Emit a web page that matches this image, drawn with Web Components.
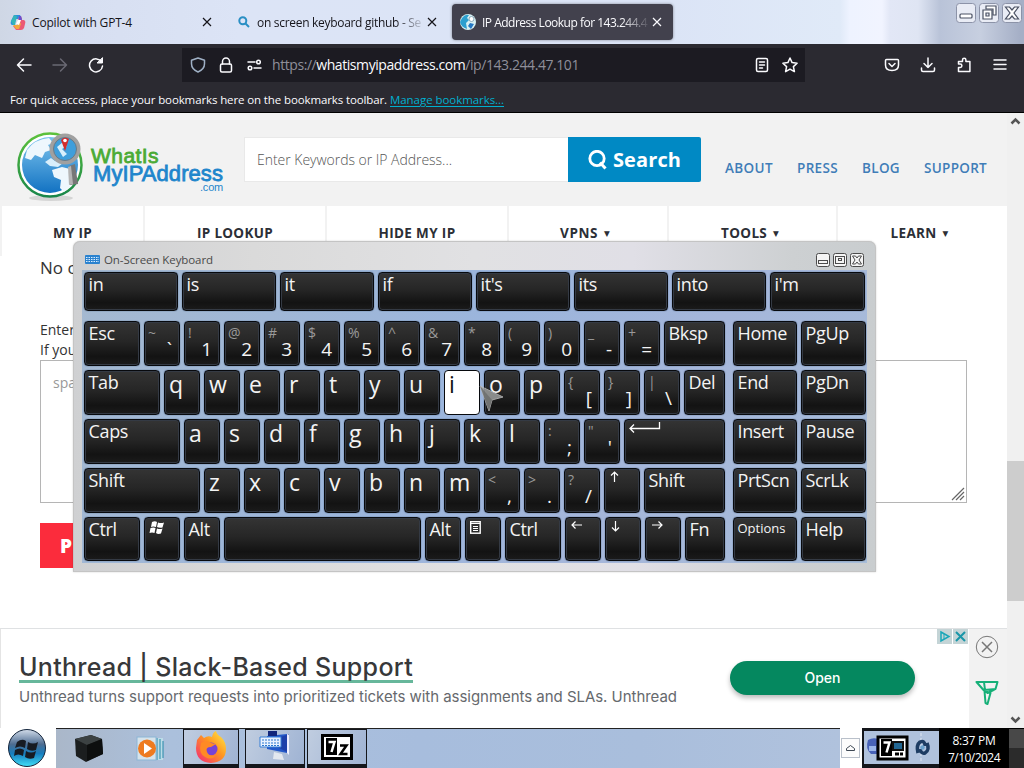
<!DOCTYPE html>
<html lang="en">
<head>
<meta charset="utf-8">
<title>IP Address Lookup</title>
<style>
  body {
    margin: 0;
    width: 1024px;
    height: 768px;
    overflow: hidden;
    display: flex;
    flex-direction: column;
    background: #fff;
    font-family: "Open Sans", "Noto Sans", sans-serif;
  }
</style>
</head>
<body>
<tab-strip>
  <browser-tab style="width:218px;padding-left:10px" text-width="100" label="Copilot with GPT-4">
    <svg slot="icon" width="16" height="16" viewBox="0 0 16 16"><path d="M4 1h6l2 4H6L4 11H2Q0 10 1 7Z" fill="#2b8fe0"/><path d="M1 7l3-6 3 1-2 9H3Z" fill="#36b5b8"/><path d="M9 2h2l1 4h2q2 1 1 4l-1 4q-1 2-3 2H6l-3-4h4Z" fill="#ec5a74"/><path d="M3 11h4l2-4 2 3-2 5H6Z" fill="#f3a83c"/><path d="M9 2h2l1 4H9Z" fill="#6b4fd0"/><path d="M6 10l2-4h3l-2 5Z" fill="#fff"/></svg>
  </browser-tab>
  <browser-tab style="width:223px;padding-left:18px;margin-left:2px" text-width="164" gap="7" label="on screen keyboard github - Se" fade>
    <svg slot="icon" width="12" height="12" viewBox="0 0 12 12" fill="none" stroke="#2a8fc4" stroke-width="2"><circle cx="4.8" cy="4.8" r="3.5"/><path d="M7.500 7.500l3.500 3.500"/></svg>
  </browser-tab>
  <browser-tab style="width:221px;padding-left:8px;margin-left:9px" text-width="165" label="IP Address Lookup for 143.244.4" fade active>
    <svg slot="icon" width="16" height="16" viewBox="0 0 16 16"><circle cx="8" cy="8" r="8" fill="#d7f1f4"/><path d="M2 4q3-4 7-3L7 4l2 2-3 3 1 6Q1 13 0 8Z" fill="#2c9fcf"/><path d="M10 9l4 1-3 5-3-3Z" fill="#2678c4"/><circle cx="11.500" cy="5" r="2.500" fill="#fff" stroke="#8ab"/></svg>
  </browser-tab>
  <window-buttons slot="buttons"></window-buttons>
</tab-strip>
<nav-toolbar></nav-toolbar>
<web-view></web-view>
<task-bar></task-bar>
<osk-window></osk-window>

<script>
// Text run stretched to a given width through letter-spacing
class FitText extends HTMLElement {
  constructor() {
    super();
    this.attachShadow({ mode: "open" });
    this.shadowRoot.innerHTML = `
      <style>
        :host { display: inline-block; flex: none; white-space: nowrap; }
      </style>
      <slot></slot>
    `;
  }

  connectedCallback() {
    const target = Number(this.getAttribute("w"));
    const n = this.textContent.length;
    if (!target || !n) return;
    this.style.letterSpacing = "0px";
    const natural = this.getBoundingClientRect().width;
    this.style.letterSpacing = (target - natural) / n + "px";
  }
}
customElements.define("fit-text", FitText);

class WindowButtons extends HTMLElement {
  constructor() {
    super();
    this.attachShadow({ mode: "open" });
    this.shadowRoot.innerHTML = `
      <style>
        :host { display: flex; gap: 3px; }
        svg { display: block; }
        rect.b { fill: #e9ecf5; stroke: #8c93a8; }
        .g { fill: #fff; stroke: #4a5163; stroke-width: 1.2; }
      </style>
      <svg width="20" height="20"><rect class="b" x=".5" y=".5" width="19" height="19" rx="3"/><rect class="g" x="4" y="11" width="12" height="4" rx="1"/></svg>
      <svg width="20" height="20"><rect class="b" x=".5" y=".5" width="19" height="19" rx="3"/><path class="g" d="M7 3h10v9h-3V6H7Z"/><path class="g" fill-rule="evenodd" d="M4 7h9v9H4ZM7 10v3h3v-3Z"/></svg>
      <svg width="20" height="20"><rect class="b" x=".5" y=".5" width="19" height="19" rx="3"/><path class="g" d="M3.500 4h4L10 7l2.500-3h4L12 10l4.500 6h-4L10 13l-2.500 3h-4L8 10Z"/></svg>
    `;
  }
}
customElements.define("window-buttons", WindowButtons);

class BrowserTab extends HTMLElement {
  constructor() {
    super();
    this.attachShadow({ mode: "open" });
  }

  connectedCallback() {
    const gap = this.getAttribute("gap") || 6;
    this.shadowRoot.innerHTML = `
      <style>
        :host {
          display: flex; align-items: center; flex: none; box-sizing: border-box;
          height: 36px; margin-top: 4px; border-radius: 4px;
          font-size: 12px; color: #15141a;
        }
        :host([active]) { background: #42414d; color: #fbfbfe; box-shadow: 0 0 3px #0006; }
        .text { margin-left: ${gap}px; flex: 1; white-space: nowrap; }
        :host([fade]) .text { mask-image: linear-gradient(90deg, #000 calc(100% - 30px), transparent); }
        .x { flex: none; margin: 0 6px 0 1px; }
        :host([active]) .x { margin-right: 11px; }
        ::slotted(svg) { flex: none; }
      </style>
      <slot name="icon"></slot>
      <div class="text"><fit-text w="${this.getAttribute("text-width")}">${this.getAttribute("label")}</fit-text></div>
      <svg class="x" width="10" height="10" stroke="currentColor" stroke-width="1.200"><path d="M1 1l8 8M9 1l-8 8"/></svg>
    `;
  }
}
customElements.define("browser-tab", BrowserTab);

class TabStrip extends HTMLElement {
  constructor() {
    super();
    this.attachShadow({ mode: "open" });
    this.shadowRoot.innerHTML = `
      <style>
        :host {
          display: flex; align-items: flex-start; flex: none; height: 44px;
          background: linear-gradient(90deg, #cfd7e5 0, #d6def0 60px, #dce4f6 240px, #dbe4f6 670px, #e0eaf8 840px, #eef3ff 850px, #f1f4ff 882px, #e2e7f6 890px, #dfe5f3 918px, #b9c3d8 940px, #c7cfe0 980px, #a5afc6 1020px);
        }
        .space { flex: 1; }
        ::slotted(window-buttons) { margin: 3px 2px 0 0; }
      </style>
      <slot></slot>
      <div class="space"></div>
      <slot name="buttons"></slot>
    `;
  }
}
customElements.define("tab-strip", TabStrip);

class NavToolbar extends HTMLElement {
  constructor() {
    super();
    this.attachShadow({ mode: "open" });
    this.shadowRoot.innerHTML = `
      <style>
        :host { display: flex; flex-direction: column; flex: none; height: 69px; background: #2b2a31; color: #fbfbfe; border-bottom: 1px solid #000; box-sizing: border-box; }
        .bar { display: flex; align-items: center; height: 41px; }
        svg { fill: none; stroke: #fbfbfe; stroke-width: 1.5; flex: none; stroke-linecap: round; stroke-linejoin: round; }
        .nav { display: flex; gap: 20px; width: 166px; padding-left: 16px; }
        .url {
          display: flex; align-items: center; width: 623px; height: 34px;
          box-sizing: border-box; padding: 0 7px 0 8px; background: #1c1b22;
          font-size: 14px; color: #8f8f9a;
        }
        .url b { font-weight: 400; color: #fbfbfe; }
        .url svg { margin-right: 12px; }
        .url svg:last-child { margin-right: 0; }
        .url fit-text { margin: 0 auto 0 -2px; }
        .right { display: flex; gap: 20px; margin: 0 16px 0 auto; }
        .marks { padding: 5px 10px 0; font-size: 11.5px; line-height: 20px; display: flex; gap: 3px; }
        .marks a { color: #00b0cf; }
        .marks a fit-text { text-decoration: underline; text-underline-offset: 2px; }
      </style>
      <div class="bar">
        <div class="nav">
          <svg width="16" height="16"><path d="M15 8H1.500M7.500 2l-6 6 6 6"/></svg>
          <svg width="16" height="16" style="stroke:#6a6973"><path d="M1 8h13.500M8.500 2l6 6-6 6"/></svg>
          <svg width="16" height="16"><path d="M13.600 5A6.500 6.500 0 1 0 14.500 9"/><path d="M14.500 1v5h-5Z" fill="#fbfbfe" stroke-width="1"/></svg>
        </div>
        <div class="url">
          <svg width="16" height="16" style="stroke:#9fb0c5"><path d="M8 1l6.500 2.300v3.500q0 5.500-6.500 8.200Q1.500 12.300 1.500 6.800V3.300Z"/></svg>
          <svg width="16" height="16"><rect x="2.500" y="7" width="11" height="8" rx="1.500"/><path d="M4.500 7V4.500a3.500 3.500 0 0 1 7 0V7"/></svg>
          <svg width="16" height="16"><circle cx="12.500" cy="5" r="1.800"/><path d="M2 5h7M8 11h7"/><circle cx="4" cy="11" r="1.800"/></svg>
          <fit-text w="307">https://<b>whatismyipaddress.com</b>/ip/143.244.47.101</fit-text>
          <svg width="16" height="16"><rect x="2.500" y="1.500" width="11" height="13" rx="1.500"/><path d="M5.500 5h5M5.500 8h5M5.500 11h3"/></svg>
          <svg width="16" height="16"><path d="M8 1l2.100 4.600 5 .6-3.700 3.400 1 5L8 12.100l-4.400 2.500 1-5L.9 6.200l5-.6Z"/></svg>
        </div>
        <div class="right">
          <svg width="16" height="16"><path d="M2.500 2.500h11q1 0 1 1V8q0 5.500-6.500 5.500T1.500 8V3.500q0-1 1-1ZM5 6.500l3 3 3-3"/></svg>
          <svg width="16" height="16"><path d="M8 1v9.500M4 6.500l4 4 4-4M1.500 11v2q0 1.500 1.500 1.500h10q1.500 0 1.500-1.500v-2"/></svg>
          <svg width="16" height="16"><path d="M2.500 14.500v-4h1.700a1.700 1.700 0 0 0 0-3.400H2.500V4.500h4V3a1.700 1.700 0 0 1 3.400 0v1.500h4v10Z"/></svg>
          <svg width="16" height="16"><path d="M2 3h12M2 7.500h12M2 12h12"/></svg>
        </div>
      </div>
      <div class="marks">
        <fit-text w="377">For quick access, place your bookmarks here on the bookmarks toolbar.</fit-text>
        <a><fit-text w="114">Manage bookmarks...</fit-text></a>
      </div>
    `;
  }
}
customElements.define("nav-toolbar", NavToolbar);

class SiteLogo extends HTMLElement {
  constructor() {
    super();
    this.attachShadow({ mode: "open" });
    this.shadowRoot.innerHTML = `
      <style>
        :host { display: flex; width: 227px; font-family: "Liberation Sans", sans-serif; }
        svg { flex: none; }
        .words { display: flex; flex-direction: column; align-items: flex-start; margin: 16px 0 0 6px; width: 132px; }
        .a { font-size: 21px; line-height: 18px; color: #4aab35; -webkit-text-stroke: .8px #4aab35; }
        .b { font-size: 22px; line-height: 18px; color: #1f86cc; margin-left: 2px; -webkit-text-stroke: .8px #1f86cc; }
        .c { font-size: 11px; line-height: 8px; color: #1f86cc; align-self: flex-end; }
      </style>
      <svg width="68" height="72" viewBox="0 0 68 72">
        <defs>
          <linearGradient id="sea" x1="0" y1="0" x2="0" y2="1"><stop offset="0" stop-color="#7cc4ee"/><stop offset="1" stop-color="#1272c2"/></linearGradient>
          <linearGradient id="ring" x1="0" y1="0" x2="0" y2="1"><stop offset="0" stop-color="#5cc13c"/><stop offset="1" stop-color="#18864a"/></linearGradient>
        </defs>
        <ellipse cx="34" cy="67" rx="22" ry="3" fill="#d5d5d5"/>
        <circle cx="33" cy="34" r="31.500" fill="#fff" stroke="url(#ring)" stroke-width="2.500"/>
        <circle cx="33" cy="34" r="28" fill="url(#sea)"/>
        <path d="M10 19Q18 8 32 7l4 5-5 2 3 5-6 2-3 6-7-3-4 5-6-2Z" fill="#eef7fd"/>
        <path d="M28 31l6-4 4 3 8 2-5 4-8-1Z" fill="#d8eefb"/>
        <path d="M35 39l10-3 12 3-1 14-9 8-4-4 1-8-7-3Z" fill="#eef7fd"/>
        <path d="M52 35l6-2 3 20-8 1Z" fill="#777"/>
        <path d="M51 36l3-1 2 18-4 1Z" fill="#b5b5b5"/>
        <circle cx="48" cy="18" r="13.500" fill="#3f9edb" stroke="#a0a0a0" stroke-width="4"/>
        <circle cx="48" cy="18" r="11.500" fill="none" stroke="#6d7a84"/>
        <path d="M40 16l6-5 4 4-5 3 5 5-4 3Z" fill="#d8effc"/>
        <path d="M44 9q3-4 8-1l-4 12Z" fill="#d32c2c"/><circle cx="48" cy="9.500" r="1.800" fill="#fff"/>
      </svg>
      <div class="words">
        <fit-text class="a" w="68">WhatIs</fit-text>
        <fit-text class="b" w="130">MyIPAddress</fit-text>
        <fit-text class="c" w="23">.com</fit-text>
      </div>
    `;
  }
}
customElements.define("site-logo", SiteLogo);

class SiteHeader extends HTMLElement {
  constructor() {
    super();
    this.attachShadow({ mode: "open" });
    this.shadowRoot.innerHTML = `
      <style>
        :host { display: block; background: #f2f2f2; }
        .top { display: flex; align-items: flex-start; height: 93px; }
        site-logo { margin: 18px 0 0 17px; }
        .field { width: 324px; height: 45px; margin-top: 24px; box-sizing: border-box; background: #fff; border: 1px solid #e9e9e9; border-right: 0; display: flex; align-items: center; font-size: 14px; font-weight: 300; color: #555; padding-left: 12px; }
        .search { width: 133px; height: 45px; margin-top: 24px; background: #0089c4; color: #fff; border-radius: 0 2px 2px 0; display: flex; align-items: center; gap: 6px; padding-left: 20px; box-sizing: border-box; font-size: 20px; font-weight: 700; }
        .links { display: flex; gap: 24px; margin: 45px 0 0 24px; font-size: 13.5px; line-height: 20px; font-weight: 600; color: #3f7db8; }
        nav { display: flex; height: 50px; padding-left: 2px; }
        nav div { box-sizing: border-box; height: 50px; padding-top: 16px; background: #fff; font-size: 13.5px; line-height: 22px; font-weight: 700; color: #2c2f36; display: flex; justify-content: center; gap: 6px; border-right: 2px solid #f2f2f2; }
        nav div:last-child { border-right: 0; }
        i { font-style: normal; font-size: 7.5px; line-height: 24px; font-family: "DejaVu Sans", sans-serif; }
      </style>
      <div class="top">
        <site-logo></site-logo>
        <div class="field"><fit-text w="195">Enter Keywords or IP Address...</fit-text></div>
        <div class="search">
          <svg width="19" height="20" fill="none" stroke="#fff" stroke-width="2.800"><circle cx="9" cy="8.500" r="7.200"/><path d="M12 12.500l5.500 6" stroke-width="3"/></svg>
          <fit-text w="68">Search</fit-text>
        </div>
        <div class="links">
          <fit-text w="48">ABOUT</fit-text><fit-text w="41">PRESS</fit-text>
          <fit-text w="38">BLOG</fit-text><fit-text w="63">SUPPORT</fit-text>
        </div>
      </div>
      <nav>
        <div style="width:143px"><fit-text w="39">MY IP</fit-text></div>
        <div style="width:182px"><fit-text w="76">IP LOOKUP</fit-text></div>
        <div style="width:182px"><fit-text w="77">HIDE MY IP</fit-text></div>
        <div style="width:160px;padding-right:6px"><fit-text w="38">VPNS</fit-text><i>▼</i></div>
        <div style="width:169px;padding-right:5px"><fit-text w="46">TOOLS</fit-text><i>▼</i></div>
        <div style="width:169px;padding-right:6px"><fit-text w="46">LEARN</fit-text><i>▼</i></div>
      </nav>
    `;
  }
}
customElements.define("site-header", SiteHeader);

class AdBanner extends HTMLElement {
  constructor() {
    super();
    this.attachShadow({ mode: "open" });
    this.shadowRoot.innerHTML = `
      <style>
        :host { display: flex; height: 100px; background: #fff; border-top: 1px solid #dfe1e3; border-left: 1px solid #e4e4e4; box-sizing: border-box; }
        .copy { width: 711px; padding: 24px 0 0 18px; box-sizing: border-box; font-family: Inter, Roboto, sans-serif; }
        h3 { margin: 0; font-size: 25px; line-height: 28px; font-weight: 500; color: #37383a; width: 394px; height: 27px; border-bottom: 3px solid #67b79b; }
        p { margin: 3px 0 0; font-size: 15px; line-height: 21px; color: #66696d; font-weight: 400; }
        button { width: 185px; height: 34px; margin: 32px 0 0 18px; padding: 0; border: 0; border-radius: 17px; background: #05885f; color: #fff; font: 500 14px/34px Inter, sans-serif; box-shadow: 0 3px 5px #0004; }
        .opts { display: flex; gap: 1px; margin: 0 1px 0 auto; }
        .side { width: 38px; background: #f2f2f2; display: flex; flex-direction: column; align-items: center; gap: 21px; padding: 6px 2px 0 0; box-sizing: border-box; }
      </style>
      <div class="copy">
        <h3><fit-text w="394">Unthread | Slack-Based Support</fit-text></h3>
        <p><fit-text w="658">Unthread turns support requests into prioritized tickets with assignments and SLAs. Unthread</fit-text></p>
      </div>
      <button>Open</button>
      <div class="opts">
        <svg width="15" height="15"><rect width="15" height="15" fill="#c4d4d6"/><path d="M4 3l8 4.500-8 4.500Z" fill="none" stroke="#17a6b8" stroke-width="1.500"/><path d="M7 5v5" stroke="#17a6b8"/></svg>
        <svg width="15" height="15"><rect width="15" height="15" fill="#c4d4d6"/><path d="M3 3l9 9M12 3l-9 9" stroke="#1996a8" stroke-width="2"/></svg>
      </div>
      <div class="side">
        <svg width="24" height="24" fill="none" stroke="#777"><circle cx="12" cy="12" r="10.700"/><path d="M7 7l10 10M17 7L7 17" stroke-width="1.500"/></svg>
        <svg width="24" height="25" fill="none" stroke="#16b078" stroke-width="2" stroke-linejoin="round"><path d="M1.500 2h21l-2 7-8 4-4-3ZM9 2l1 8M9.500 11l6 2-3 11-2-1ZM9 10l12-1"/></svg>
      </div>
    `;
  }
}
customElements.define("ad-banner", AdBanner);

class WebView extends HTMLElement {
  constructor() {
    super();
    this.attachShadow({ mode: "open" });
    this.shadowRoot.innerHTML = `
      <style>
        :host { display: flex; height: 615px; flex: none; }
        .page { width: 1007px; display: flex; flex-direction: column; background: #fff; }
        .body { flex: 1; padding: 0 40px; color: #333; }
        .none { font-size: 17px; line-height: 24px; }
        .hint { font-size: 14px; line-height: 20px; margin-top: 40px; }
        .area { width: 927px; height: 143px; box-sizing: border-box; border: 1px solid #b5b5b5; padding: 12px; font-size: 14px; line-height: 20px; color: #999; display: flex; justify-content: space-between; }
        .area svg { align-self: flex-end; margin: 0 -12px -12px 0; }
        .post { width: 140px; height: 45px; margin-top: 20px; padding-left: 20px; box-sizing: border-box; background: #fb2c3c; color: #fff; font-weight: 800; font-size: 19px; line-height: 46px; }
        .scroll { width: 17px; background: #f0f0f0; display: flex; flex-direction: column; align-items: center; }
        .scroll svg { fill: none; stroke: #555; stroke-width: 2.500; flex: none; }
        .gap { height: 331px; }
        .thumb { width: 17px; height: 140px; background: #cdcdcd; margin-bottom: auto; }
      </style>
      <div class="page">
        <site-header></site-header>
        <div class="body">
          <div class="none">No c</div>
          <div class="hint">Enter<br>If you</div>
          <div class="area">spa
            <svg width="16" height="16" stroke="#666" stroke-width="1.200"><path d="M2 14L14 2M6 14l8-8M10 14l4-4"/></svg>
          </div>
          <div class="post">P</div>
        </div>
        <ad-banner></ad-banner>
      </div>
      <div class="scroll">
        <svg width="17" height="17"><path d="M4.500 10.500l4-4 4 4"/></svg>
        <div class="gap"></div>
        <div class="thumb"></div>
        <svg width="17" height="17"><path d="M4.500 6.500l4 4 4-4"/></svg>
      </div>
    `;
  }
}
customElements.define("web-view", WebView);

class TaskBar extends HTMLElement {
  constructor() {
    super();
    this.attachShadow({ mode: "open" });
    this.shadowRoot.innerHTML = `
      <style>
        :host { display: flex; flex: none; height: 40px; background: linear-gradient(90deg, #aab7c9 56px, #abc0dc 170px, #a7bddd 420px, #a9bedc 640px, #b0c2dd 840px); }
        svg { display: block; flex: none; }
        .start { width: 56px; background: #fff; display: flex; justify-content: center; align-items: center; }
        .apps { display: flex; flex: 1; border-top: 1px solid #222; align-items: center; }
        .app { width: 60px; display: flex; justify-content: center; }
        .open { width: 56px; height: 39px; margin-left: 6px; box-sizing: border-box; border: 1px solid #14161b; border-bottom-width: 4px; align-items: center; background: linear-gradient(110deg, #c0cde0, #9fb3d3); }
        .open.wide { width: 60px; }
        .open.last { margin-left: 2px; }
        .tray { display: flex; }
        .up { width: 22px; background: #fff; display: flex; align-items: center; justify-content: center; }
        .icons { width: 77px; box-sizing: border-box; border: solid #14161b; border-width: 3px 0 4px 2px; display: flex; align-items: center; }
        .clock { width: 70px; background: #000; color: #fff; font-size: 12px; line-height: 17px; padding-top: 4px; box-sizing: border-box; display: flex; flex-direction: column; align-items: center; }
        .peek { width: 15px; background: linear-gradient(#484848 50%, #2b2b2b 50%); border-top: 1px solid #000; box-sizing: border-box; }
      </style>
      <div class="start">
        <svg width="40" height="40" viewBox="0 0 40 40">
          <defs><linearGradient id="orb" x1="0" y1="0" x2="0" y2="1"><stop offset="0" stop-color="#d2dcea"/><stop offset=".4" stop-color="#4d6c91"/><stop offset=".65" stop-color="#167dbe"/><stop offset="1" stop-color="#42e0f8"/></linearGradient></defs>
          <circle cx="19" cy="20" r="18.500" fill="url(#orb)" stroke="#13253c"/>
          <path d="M9 14q5-4 9-1l-1 7q-5-3-10 0ZM20 14q5 3 10 0l-2 8q-5 2-9-1ZM7 22q5-3 9 0l-1 6q-5-3-9 0ZM18 23q5 3 10 0l-2 7q-5 2-9-1Z" fill="#171b23"/>
        </svg>
      </div>
      <div class="apps">
        <div class="app" style="width:66px">
          <svg width="32" height="32"><path d="M2 6L18 2l11 4 1 15-17 8L3 23Z" fill="#1b1e1f"/><path d="M2 6L18 2l11 4-15 6Z" fill="#3c4243"/><path d="M14 12l15-6 1 15-16 7Z" fill="#0d0f0f"/></svg>
        </div>
        <div class="app" style="width:55px">
          <svg width="28" height="26"><path d="M18 2h9v22h-9" fill="#bcdce8"/><path d="M21 2v22M24 3v20M27 5v17" stroke="#2688a8"/><rect x="1" y="1" width="19" height="23" fill="#d6e3eb" stroke="#8bb6d6"/><circle cx="11" cy="12.500" r="9" fill="#ee7b20"/><path d="M8 7l8 5.500L8 18Z" fill="#fff"/></svg>
        </div>
        <div class="app open">
          <svg width="32" height="32" viewBox="0 0 32 32">
            <defs><linearGradient id="fox" x1="1" y1="0" x2="0" y2="1"><stop offset="0" stop-color="#fff04a"/><stop offset=".45" stop-color="#ff9520"/><stop offset="1" stop-color="#f4227b"/></linearGradient></defs>
            <path d="M2 9l4-5 3 3q4-3 8-1 1-5 4-6 1 4 5 6 5 5 5 12 0 13-15 14Q1 31 1 17Z" fill="url(#fox)"/>
            <circle cx="16" cy="18" r="6.500" fill="#7743d5"/>
            <path d="M6 12q5-4 10 0l5 1-5 3q-6 0-4 5 2 5 9 3-4 6-11 2T6 12Z" fill="#ff8a25"/>
          </svg>
        </div>
        <div class="app open wide">
          <svg width="32" height="32"><path d="M8 5l20-2v19L8 18Z" fill="#2459c9"/><path d="M8 11l20 10 2-18Z" fill="#1a2f94" opacity=".6"/><path d="M28 3l2 1v20l-2-2Z" fill="#eef"/><path d="M9 0h9v5H9Z" fill="#13277c"/><path d="M1 6h21v10H1Z" fill="#eaf2ff" stroke="#367fd5"/><path d="M3 9h18M3 12h18M3 14.500h18" stroke="#2b79d0" stroke-dasharray="2 1"/><path d="M15 21l8 2 2 6-11-1Z" fill="#e3e8ef"/></svg>
        </div>
        <div class="app open wide last">
          <svg width="32" height="26"><path d="M1.500 1.500h29v23h-29Z" fill="#fff" stroke="#000" stroke-width="3"/><path d="M5 4h11v17H5Z"/><path d="M7.500 8h6l-3 10" fill="none" stroke="#fff" stroke-width="2.500"/><path d="M19 11.500h6.500l-6 8.500h7" fill="none" stroke="#000" stroke-width="2.500"/></svg>
        </div>
      </div>
      <div class="tray">
        <div class="up"><svg width="20" height="20"><rect x=".5" y=".5" width="18" height="19" fill="#fcfcfc" stroke="#b9c0ca"/><path d="M5.500 12.500h8v-2l-4-3-4 3Z" fill="none" stroke="#3e4854"/></svg></div>
        <div class="icons">
          <svg width="74" height="30"><path d="M4 7q5-3 10-1v15H7Q1 16 4 7Z" fill="#4862b8"/><path d="M5 13h7v5H5Z" fill="#9bb5ea"/><rect x="14" y="4" width="29" height="22" fill="#fff" stroke="#000" stroke-width="3"/><path d="M17 6h11v17H17Z"/><path d="M19.500 9.500h6l-3 10" fill="none" stroke="#fff" stroke-width="2.500"/><path d="M29 9h10v8H29Z" fill="#236793" stroke="#111" stroke-width="2"/><path d="M31 21h8" stroke="#000" stroke-width="3" stroke-dasharray="4 1"/><path d="M57 0v30" stroke="#dde5f2" stroke-dasharray="3 2"/><path d="M54 20q-2-8 2-11 5-2 5 4M63 10q3 7-2 10-4 1-5-4" fill="none" stroke="#1d3c63" stroke-width="3.500"/><circle cx="58.500" cy="14.500" r="2.200" fill="#68a0cc"/></svg>
        </div>
        <div class="clock"><fit-text w="43">8:37 PM</fit-text><fit-text w="52">7/10/2024</fit-text></div>
        <div class="peek"></div>
      </div>
    `;
  }
}
customElements.define("task-bar", TaskBar);

class OskKey extends HTMLElement {
  constructor() {
    super();
    this.attachShadow({ mode: "open" });
    this.shadowRoot.innerHTML = `
      <style>
        :host {
          display: flex; flex: none; box-sizing: border-box;
          padding-left: 3.500px; border: 1px solid #07090d; border-radius: 4px;
          background: linear-gradient(#343434, #262626 45%, #131313 80%, #1b1b1b);
          box-shadow: inset 0 0 0 1px #343a44, 0 0 1px #132a4c;
          color: #f4f4f4; font-size: 18px; line-height: 22px; letter-spacing: -.35px; white-space: nowrap;
        }
        :host([kind=letter]) { font-size: 23px; line-height: 27px; letter-spacing: 0; padding-left: 4px; }
        :host([kind=small]) { font-size: 13px; line-height: 21px; letter-spacing: 0; }
        :host([kind=glyph]) { padding-left: 4px; }
        :host([kind=dual]) { justify-content: space-between; padding: 0 7px 0 3px; letter-spacing: 0; }
        :host([active]) { background: #fff; color: #111; box-shadow: none; }
        .upper { font-size: 14px; line-height: 21px; color: #9a9a9a; width: 12px; }
        .main { align-self: flex-end; font-size: 19px; line-height: 32px; }
        :host(:not([kind=dual])) .upper { display: none; }
        :host(:not([kind=dual])) .main { align-self: flex-start; font-size: inherit; line-height: inherit; }
      </style>
      <span class="upper"><slot name="upper"></slot></span>
      <span class="main"><slot></slot></span>
    `;
  }
}
customElements.define("osk-key", OskKey);

const arrow = (d) => `<svg width="14" height="14" style="display:block;margin:1px 0 0 1px" fill="none" stroke="#fff" stroke-width="1.2"><path d="${d}"/></svg>`;
const GLYPHS = {
  win: `<svg width="18" height="16" style="display:block;margin:2px 0 0 -1px" fill="#fff"><path d="M4 2q3-1.500 5 0L8 7q-3-1-5 0ZM10 2.500q3 1 6 0l-1.500 5q-3 .8-5.500-.5ZM2.500 8q3-1 5 0l-1 5q-2.500-1-5 0ZM9 8.500q3 1 5.500 0l-1.500 5q-3 1-5-.5Z"/></svg>`,
  menu: `<svg width="14" height="15" style="display:block;margin:2px 0 0 -1px"><rect x="1.700" y="1.700" width="9.500" height="11.500" fill="none" stroke="#fff" stroke-width="1.400"/><path d="M2 3.500h9M4 6.500h5M4 8.500h5M4 10.500h5" stroke="#fff"/></svg>`,
  enter: `<svg width="34" height="14" style="display:block;margin:1px 0 0 -1px" fill="none" stroke="#fff" stroke-width="1.300"><path d="M31.500 1v6.500H2M6 3.500l-4 4 4 4"/></svg>`,
  up: arrow("M4.500 12V2M1 5.500L4.500 2 8 5.500"),
  left: arrow("M11 6H1M4.500 2.500L1 6l3.500 3.500"),
  down: arrow("M4.500 2v10M1 8.500L4.500 12 8 8.500"),
  right: arrow("M1 6h10M7.500 2.500L11 6 7.500 9.500")
};

// [width, label, kind]; dual keys carry "shifted base"
const letters = (s) => [...s].map((c) => [36, c, "letter"]);
const duals = (list) => list.map((s) => [36, s, "dual"]);
const ROWS = [
  [[56, "Esc"], ...duals(["~ `", "! 1", "@ 2", "# 3", "$ 4", "% 5", "^ 6", "&amp; 7", "* 8", "( 9", ") 0", "_ -", "+ ="]), [61, "Bksp"], [64, "Home"], [65, "PgUp"]],
  [[76, "Tab"], ...letters("qwertyuiop"), ...duals(["{ [", "} ]", "| \\"]), [41, "Del"], [64, "End"], [65, "PgDn"]],
  [[96, "Caps"], ...letters("asdfghjkl"), ...duals([": ;", "\" '"]), [101, "enter", "glyph"], [64, "Insert"], [65, "Pause"]],
  [[116, "Shift"], ...letters("zxcvbnm"), ...duals(["&lt; ,", "&gt; .", "? /"]), [36, "up", "glyph"], [81, "Shift"], [64, "PrtScn"], [65, "ScrLk"]],
  [[56, "Ctrl"], [36, "win", "glyph"], [36, "Alt"], [197, ""], [36, "Alt"], [36, "menu", "glyph"], [56, "Ctrl"], [36, "left", "glyph"], [36, "down", "glyph"], [36, "right", "glyph"], [40, "Fn"], [64, "Options", "small"], [65, "Help"]]
];
const WORDS = ["in", "is", "it", "if", "it's", "its", "into", "i'm"];

class OskWindow extends HTMLElement {
  constructor() {
    super();
    this.attachShadow({ mode: "open" });
    this.shadowRoot.innerHTML = `
      <style>
        :host {
          position: absolute; left: 73px; top: 241px; width: 803px; height: 331px;
          display: flex; flex-direction: column; box-sizing: border-box;
          padding: 0 9px 9px; border-radius: 7px 7px 0 0;
          background: linear-gradient(90deg, #cfd0d2, #dadada 180px, #e1e1e3 400px, #e0dfe6 560px, #cdd0d2 720px, #c9cdcf);
          box-shadow: inset 0 0 0 1px #c4c4c4, 0 0 2px #0003;
        }
        header { display: flex; align-items: center; height: 29px; padding: 8px 2px 0 3px; box-sizing: border-box; font-size: 11.500px; color: #4a4a4a; }
        header fit-text { margin: 0 auto 0 4px; }
        .mini { display: flex; gap: 3px; margin-right: 1px; }
        .mini svg { fill: #f4f4f4; stroke: #4c4c4c; }
        .keys { flex: 1; background: linear-gradient(120deg, #a5b9d0, #9bb5dc 45%, #a5b6da 70%, #a7bdd9); padding: 2px 0 0 2px; display: flex; flex-direction: column; gap: 4px; }
        .row { display: flex; gap: 4px; height: 45px; }
        .row:last-child { height: 44px; }
        .row.words { height: 39px; margin-bottom: 6px; }
        .row osk-key:nth-last-child(2) { margin-left: 4px; }
        .row.words osk-key { width: 94px; margin: 0; }
        .row.words osk-key:last-child { width: 95px; }
        .pointer { position: absolute; left: 405px; top: 142px; }
      </style>
      <header>
        <svg width="15" height="9"><rect width="15" height="9" rx="1" fill="#2a82cf"/><path d="M1 2.500h13M1 4.500h13M1 6.500h13" stroke="#d8ecff" stroke-dasharray="1.500 1"/></svg>
        <fit-text w="109">On-Screen Keyboard</fit-text>
        <div class="mini">
          <svg width="14" height="14"><rect x=".5" y=".5" width="13" height="13" rx="2"/><rect x="2.500" y="7.500" width="9" height="3"/></svg>
          <svg width="14" height="14"><rect x=".5" y=".5" width="13" height="13" rx="2"/><rect x="2.500" y="3.500" width="9" height="7"/><rect x="5.500" y="5.500" width="3" height="2"/></svg>
          <svg width="14" height="14"><rect x=".5" y=".5" width="13" height="13" rx="2"/><path d="M2.500 3h3L7 5l1.500-2h3L9 7l2.500 4h-3L7 9l-1.500 2h-3L5 7Z"/></svg>
        </div>
      </header>
      <div class="keys">
        <div class="row words">${WORDS.map((w) => `<osk-key>${w}</osk-key>`).join("")}</div>
        ${ROWS.map((row) => `<div class="row">${row.map(this.key).join("")}</div>`).join("")}
      </div>
      <svg class="pointer" width="28" height="30"><path d="M2 3l23 11-11 3-3 11Z" fill="#9c9e9d" stroke="#bdbdbd" opacity=".85"/><path d="M2 3l12 14-3 11Z" fill="#6b6d6c" opacity=".8"/></svg>
    `;
  }

  key([width, label, kind]) {
    let inner = label;
    if (kind === "dual") {
      const [upper, base] = label.split(" ");
      inner = `<span slot="upper">${upper}</span>${base}`;
    }
    if (kind === "glyph") inner = GLYPHS[label];
    return `<osk-key style="width:${width}px" kind="${kind || "text"}"${label === "i" ? " active" : ""}>${inner}</osk-key>`;
  }
}
customElements.define("osk-window", OskWindow);
</script>
</body>
</html>
